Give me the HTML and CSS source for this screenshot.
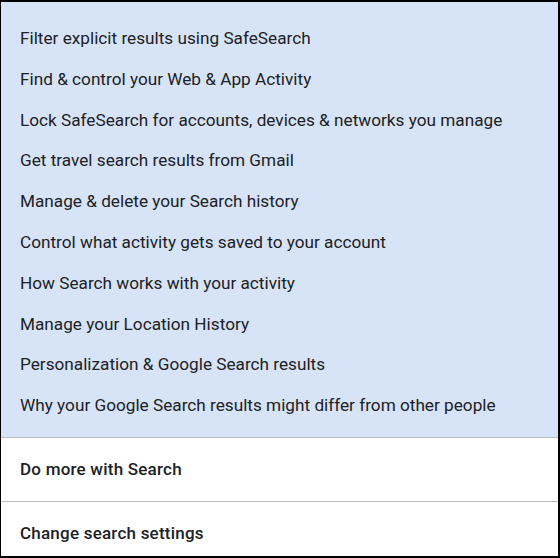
FILE: index.html
```html
<!DOCTYPE html>
<html>
<head>
<meta charset="utf-8">
<link rel="stylesheet" href="styles.css">
</head>
<body>
<div class="frame">
  <ul class="related">
    <li>Filter explicit results using SafeSearch</li>
    <li>Find &amp; control your Web &amp; App Activity</li>
    <li>Lock SafeSearch for accounts, devices &amp; networks you manage</li>
    <li>Get travel search results from Gmail</li>
    <li>Manage &amp; delete your Search history</li>
    <li>Control what activity gets saved to your account</li>
    <li>How Search works with your activity</li>
    <li>Manage your Location History</li>
    <li>Personalization &amp; Google Search results</li>
    <li>Why your Google Search results might differ from other people</li>
  </ul>
  <div class="section">Do more with Search</div>
  <div class="section">Change search settings</div>
</div>
</body>
</html>
```
FILE: styles.css
```css
html, body {
  margin: 0;
  padding: 0;
  background: #000;
}
.frame {
  box-sizing: border-box;
  width: 560px;
  height: 558px;
  border-style: solid;
  border-color: #000;
  border-width: 2px 2px 2px 1px;
  background: #fff;
  overflow: hidden;
  font-family: Roboto, "Liberation Sans", sans-serif;
  color: #202124;
}
.related {
  list-style: none;
  margin: 0;
  padding: 16px 0 11px 19px;
  background: #d7e4f7;
}
.related li {
  font-size: 17.2px;
  line-height: 40.8px;
  height: 40.8px;
}
.section {
  box-sizing: border-box;
  height: 64px;
  line-height: 62px;
  padding-left: 19px;
  border-top: 1px solid #bdbdbd;
  font-size: 17px;
  font-weight: 500;
  letter-spacing: 0.22px;
}
```
